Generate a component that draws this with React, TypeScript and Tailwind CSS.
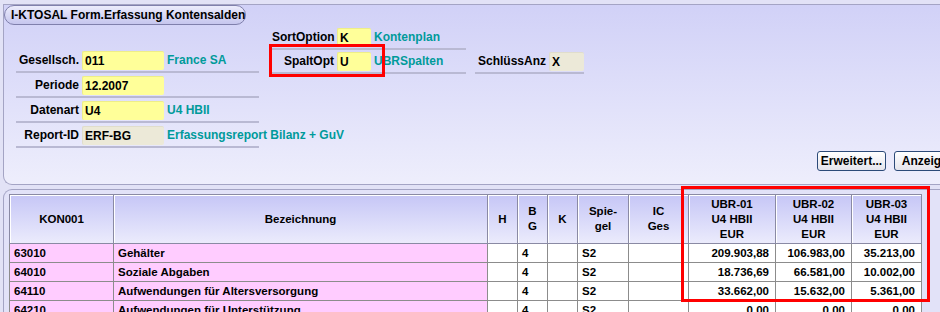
import React from 'react';

const FONT = "font-['Liberation_Sans',Arial,sans-serif]";

type FieldProps = {
  label: string;
  value: string;
  note?: string;
  labelW: string;
  inputW: string;
  gray?: boolean;
};

const Field = ({ label, value, note, labelW, inputW, gray }: FieldProps) => (
  <div className="flex items-start h-[22px] border-b-2 border-[#b9b9d3]">
    <div className={`${labelW} shrink-0 h-[19px] leading-[19px] text-right pr-[3px] text-black whitespace-nowrap`}>{label}</div>
    <div
      className={`${inputW} shrink-0 h-[19px] leading-[19px] pl-[2px] rounded-[2px] border-t border-l whitespace-nowrap ${
        gray ? 'bg-[#ece9d8] border-[#e0ddcc]' : 'bg-[#ffff99] border-[#eeee88]'
      } text-black`}
    >
      {value}
    </div>
    {note && <div className="shrink-0 h-[19px] leading-[19px] pl-[3px] text-[#009a9a] whitespace-nowrap">{note}</div>}
  </div>
);

const rows = [
  { kon: '63010', bez: 'Gehälter', bg: '4', sp: 'S2', u1: '209.903,88', u2: '106.983,00', u3: '35.213,00' },
  { kon: '64010', bez: 'Soziale Abgaben', bg: '4', sp: 'S2', u1: '18.736,69', u2: '66.581,00', u3: '10.002,00' },
  { kon: '64110', bez: 'Aufwendungen für Altersversorgung', bg: '4', sp: 'S2', u1: '33.662,00', u2: '15.632,00', u3: '5.361,00' },
  { kon: '64210', bez: 'Aufwendungen für Unterstützung', bg: '4', sp: 'S2', u1: '0,00', u2: '0,00', u3: '0,00' },
];

const th = 'border border-[#8a8aa4] shadow-[inset_1px_1px_0_#ffffff] font-bold text-center align-middle leading-[15px] p-0';
const td = 'border border-[#8c8c8c] h-[19px] p-0 leading-[18px] whitespace-nowrap';

export default function App() {
  return (
    <div className={`relative w-[940px] h-[312px] overflow-hidden bg-[#e2e2f6] ${FONT} text-[12px] font-bold`}>
      {/* Form panel */}
      <div className="mt-[4px] ml-[3px] w-[960px] h-[181px] border-t border-l border-b border-[#a4a4c4] rounded-bl-[9px] bg-gradient-to-b from-[#d1d1f7] to-[#eeeefc]">
        <div className="w-[242px] h-[20px] leading-[19px] pl-[6px] rounded-full border border-[#8080ac] bg-gradient-to-b from-[#ececfc] to-[#c6c6ee] text-black whitespace-nowrap">
          I-KTOSAL Form.Erfassung Kontensalden
        </div>

        <div className="flex items-start">
          <div className="ml-[12px] mt-[26px] w-[243px] shrink-0 flex flex-col gap-[3px]">
            <Field label="Gesellsch." value="011" note="France SA" labelW="w-[66px]" inputW="w-[82px]" />
            <Field label="Periode" value="12.2007" labelW="w-[66px]" inputW="w-[82px]" />
            <Field label="Datenart" value="U4" note="U4 HBII" labelW="w-[66px]" inputW="w-[82px]" />
            <Field label="Report-ID" value="ERF-BG" note="Erfassungsreport Bilanz + GuV" labelW="w-[66px]" inputW="w-[82px]" gray />
          </div>
          <div className="ml-[13px] mt-[3px] w-[194px] shrink-0 flex flex-col gap-[2px]">
            <Field label="SortOption" value="K" note="Kontenplan" labelW="w-[65px]" inputW="w-[34px]" />
            <Field label="SpaltOpt" value="U" note="UBRSpalten" labelW="w-[65px]" inputW="w-[34px]" />
          </div>
          <div className="ml-[9px] mt-[27px] w-[109px] shrink-0">
            <Field label="SchlüssAnz" value="X" labelW="w-[74px]" inputW="w-[35px]" gray />
          </div>
        </div>

        <div className="flex gap-[8px] ml-[813px] mt-[3px]">
          <button className="w-[74px] h-[20px] rounded-[3px] border border-[#2c4a78] bg-gradient-to-b from-[#ffffff] to-[#e4e4ec] text-black leading-[17px] whitespace-nowrap">
            Erweitert...
          </button>
          <button className="w-[74px] h-[20px] rounded-[3px] border border-[#2c4a78] bg-gradient-to-b from-[#ffffff] to-[#e4e4ec] text-black leading-[17px] whitespace-nowrap">
            Anzeigen
          </button>
        </div>
      </div>

      {/* Table panel */}
      <div className="mt-[4px] ml-[3px] w-[960px] h-[200px] border-t border-l border-[#a4a4c4] rounded-tl-[9px] bg-[#e2e2f8] pl-[5px] pt-[4px]">
        <table className="border-collapse table-fixed text-[11.5px]">
          <colgroup>
            <col className="w-[104px]" />
            <col className="w-[374px]" />
            <col className="w-[30px]" />
            <col className="w-[30px]" />
            <col className="w-[30px]" />
            <col className="w-[51px]" />
            <col className="w-[60px]" />
            <col className="w-[87px]" />
            <col className="w-[76px]" />
            <col className="w-[70px]" />
          </colgroup>
          <thead>
            <tr className="h-[49px] bg-gradient-to-b from-[#c6c6f6] to-[#ececfc]">
              <th className={th}>KON001</th>
              <th className={th}>Bezeichnung</th>
              <th className={th}>H</th>
              <th className={th}>B<br />G</th>
              <th className={th}>K</th>
              <th className={th}>Spie-<br />gel</th>
              <th className={th}>IC<br />Ges</th>
              <th className={th}>UBR-01<br />U4 HBII<br />EUR</th>
              <th className={th}>UBR-02<br />U4 HBII<br />EUR</th>
              <th className={th}>UBR-03<br />U4 HBII<br />EUR</th>
            </tr>
          </thead>
          <tbody>
            {rows.map((r) => (
              <tr key={r.kon}>
                <td className={`${td} bg-[#ffccff] pl-[4px]`}>{r.kon}</td>
                <td className={`${td} bg-[#ffccff] pl-[4px]`}>{r.bez}</td>
                <td className={`${td} bg-white`}></td>
                <td className={`${td} bg-white pl-[4px]`}>{r.bg}</td>
                <td className={`${td} bg-white`}></td>
                <td className={`${td} bg-white pl-[4px]`}>{r.sp}</td>
                <td className={`${td} bg-white`}></td>
                <td className={`${td} bg-white text-right pr-[6px]`}>{r.u1}</td>
                <td className={`${td} bg-white text-right pr-[6px]`}>{r.u2}</td>
                <td className={`${td} bg-white text-right pr-[6px]`}>{r.u3}</td>
              </tr>
            ))}
          </tbody>
        </table>
      </div>

      {/* red highlight frames */}
      <div className="absolute left-[269px] top-[44px] w-[116px] h-[33px] border-[3px] border-[#ff0000] pointer-events-none" />
      <div className="absolute left-[681px] top-[186px] w-[249px] h-[116px] border-[3px] border-[#ff0000] pointer-events-none" />
    </div>
  );
}
